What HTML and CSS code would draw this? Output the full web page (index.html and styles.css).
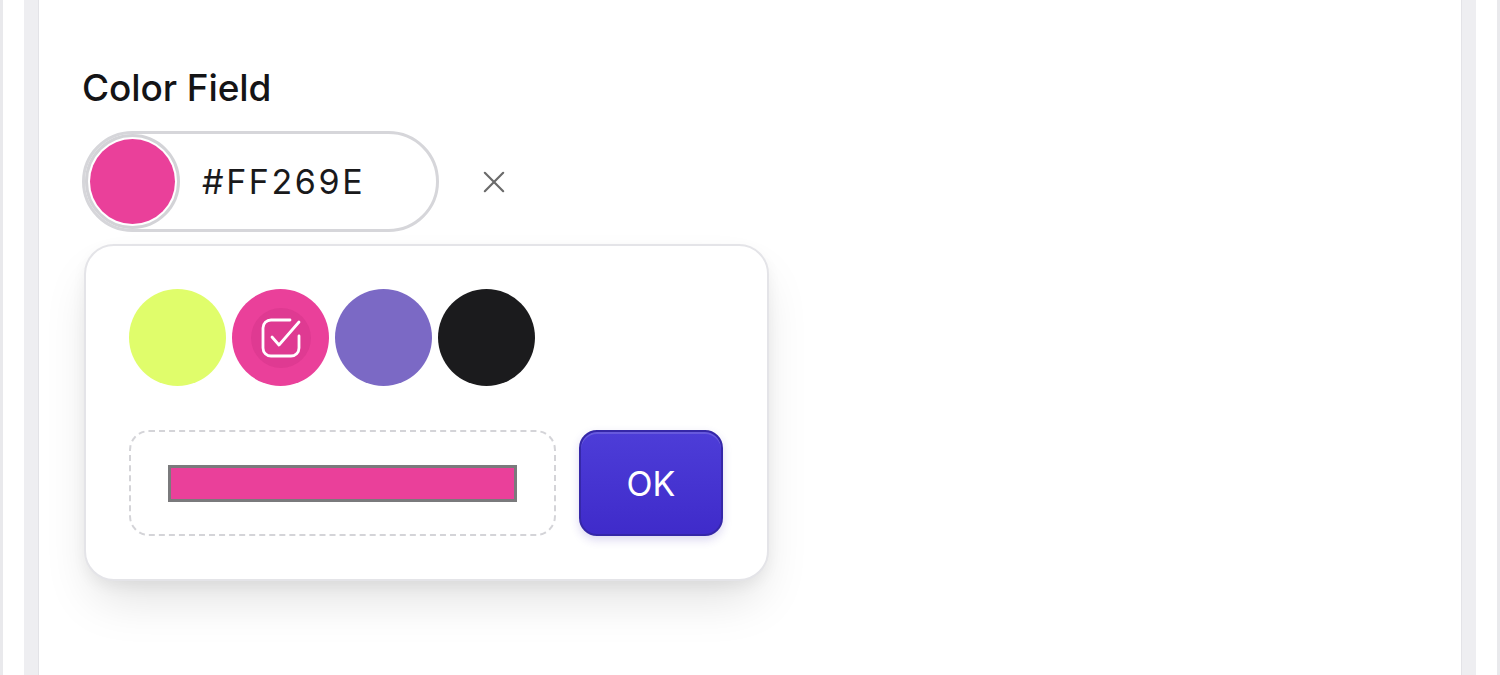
FILE: index.html
```html
<!DOCTYPE html>
<html lang="en">
<head>
<meta charset="utf-8">
<title>Color Field</title>
<link rel="stylesheet" href="styles.css">
</head>
<body>
<div class="frame">
  <div class="card">
    <div class="field">
      <div class="label">Color Field</div>
      <div class="control-row">
        <div class="picker-wrap">
          <div class="pill">
            <span class="swatch"><span class="swatch-fill"></span></span>
            <span class="hex">#FF269E</span>
          </div>
          <div class="popover">
            <div class="swatches">
              <span class="dot dot-lime"></span>
              <span class="dot dot-pink">
                <span class="check-bg">
                  <svg class="check" viewBox="0 0 24 24" fill="none" stroke="#fff" stroke-width="1.4" stroke-linecap="round" stroke-linejoin="round">
                    <path d="M21 11v6a4 4 0 0 1-4 4H7a4 4 0 0 1-4-4V7a4 4 0 0 1 4-4h9.5"/>
                    <path d="M7.5 11.5l3.5 4L21 4"/>
                  </svg>
                </span>
              </span>
              <span class="dot dot-purple"></span>
              <span class="dot dot-black"></span>
            </div>
            <div class="custom-row">
              <div class="custom-box"><div class="color-bar"></div></div>
              <button class="ok">OK</button>
            </div>
          </div>
        </div>
        <svg class="clear" viewBox="0 0 24 24" fill="none" stroke="#6b6b6b" stroke-width="2.4" stroke-linecap="round">
          <path d="M2 2l20 20M22 2L2 22"/>
        </svg>
      </div>
    </div>
  </div>
</div>
</body>
</html>
```

FILE: styles.css
```css
* { box-sizing: border-box; }
html, body { margin: 0; padding: 0; background: #fff; }
body { font-family: Inter, "Noto Sans", "Liberation Sans", sans-serif; color: #161618; }

.frame {
  width: 1500px;
  height: 675px;
  border-left: 3px solid #e9e9ec;
  border-right: 3px solid #e9e9ec;
  padding: 0 21px;
  overflow: hidden;
}
.card {
  height: 100%;
  background: #fff;
  border-left: 14px solid #eeeef1;
  border-right: 14px solid #eeeef1;
  box-shadow: inset 1px 0 0 #e3e3e7, inset -1px 0 0 #e3e3e7;
  padding: 66px 44px 0 44px;
}
.label {
  font-size: 37px;
  font-weight: 500;
  line-height: 44px;
  letter-spacing: -0.1px;
  color: #141416;
}
.control-row {
  margin-top: 21px;
  display: flex;
  align-items: center;
  gap: 44px;
}
.picker-wrap { position: relative; }
.pill {
  width: 357px;
  height: 101px;
  border: 3px solid #d6d6da;
  border-radius: 51px;
  display: flex;
  align-items: center;
  background: #fff;
}
.swatch {
  width: 95px;
  height: 95px;
  border-radius: 50%;
  border: 3px solid #d3d3d7;
  padding: 2px;
  background: #fff;
  display: block;
  flex: none;
}
.swatch-fill {
  display: block;
  width: 100%;
  height: 100%;
  border-radius: 50%;
  background: #ea409a;
}
.hex {
  margin-left: 22px;
  font-size: 34px;
  letter-spacing: 2.6px;
  color: #19191b;
}
.clear { width: 22px; height: 22px; display: block; }

.popover {
  position: absolute;
  top: calc(100% + 12px);
  left: 2px;
  width: 685px;
  padding: 43px;
  background: #fff;
  border: 2px solid #e4e4e8;
  border-radius: 30px;
  box-shadow: 0 26px 50px -10px rgba(0,0,0,0.13), 0 6px 14px rgba(0,0,0,0.05);
}
.swatches { display: flex; gap: 6px; }
.dot {
  width: 97px;
  height: 97px;
  border-radius: 50%;
  display: flex;
  align-items: center;
  justify-content: center;
}
.dot-lime { background: #e0fd6b; }
.dot-pink { background: #ea409a; }
.dot-purple { background: #7b69c5; }
.dot-black { background: #1b1b1d; }
.check-bg {
  width: 60px;
  height: 60px;
  border-radius: 50%;
  background: rgba(150, 20, 90, 0.12);
  display: flex;
  align-items: center;
  justify-content: center;
}
.check { width: 48px; height: 48px; display: block; }

.custom-row {
  margin-top: 44px;
  display: flex;
  gap: 23px;
}
.custom-box {
  width: 427px;
  height: 106px;
  border: 2px dashed #d4d4d8;
  border-radius: 20px;
  display: flex;
  align-items: center;
  justify-content: center;
}
.color-bar {
  width: 349px;
  height: 37px;
  background: #ea409a;
  border: 3px solid #7a7a7c;
}
.ok {
  width: 144px;
  height: 106px;
  border-radius: 18px;
  border: 2px solid #3527a8;
  background: linear-gradient(#4d3dd8, #3f2bca);
  color: #fff;
  font-family: Inter, "Noto Sans", sans-serif;
  font-size: 34px;
  font-weight: 400;
  box-shadow: inset 0 2px 0 rgba(255,255,255,0.15), 0 4px 10px rgba(60,40,180,0.18);
  padding: 0;
}
```
